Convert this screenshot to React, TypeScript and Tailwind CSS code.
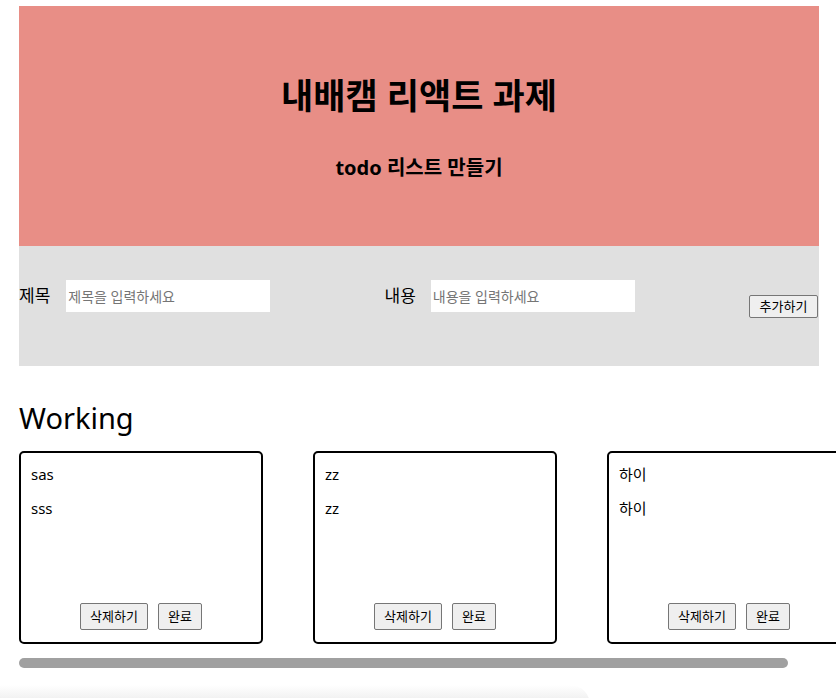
const todos = [
  { id: 1, title: "sas", body: "sss" },
  { id: 2, title: "zz", body: "zz" },
  { id: 3, title: "하이", body: "하이" }
];

const font = "font-['Noto_Sans','Noto_Sans_CJK_KR',sans-serif]";

const nativeButton =
  "rounded-[2px] border border-[#767676] bg-[#efefef] text-[13px] leading-[17px] text-black";

function TodoCard({ title, body }: { title: string; body: string }) {
  return (
    <div className="flex h-[193px] w-[244px] shrink-0 flex-col rounded-[5px] border-2 border-black px-[10px] pb-[12px] pt-[11px]">
      <p className="text-[15px] leading-[20px]">{title}</p>
      <p className="mt-[14px] text-[15px] leading-[20px]">{body}</p>
      <div className="mt-auto flex justify-center gap-[10px]">
        <button type="button" className={`${nativeButton} h-[27px] px-[9px]`}>
          삭제하기
        </button>
        <button type="button" className={`${nativeButton} h-[27px] px-[9px]`}>
          완료
        </button>
      </div>
    </div>
  );
}

export default function App() {
  return (
    <div className={`${font} h-[698px] overflow-hidden bg-white text-black`}>
      <div className="ml-[19px] pt-[6px]">
        <header className="flex h-[240px] w-[800px] flex-col items-center bg-[#e88e86] pt-[68px]">
          <h1 className="text-[35px] font-bold leading-[44px]">내배캠 리액트 과제</h1>
          <h2 className="mt-[36px] text-[20px] font-bold leading-[28px]">todo 리스트 만들기</h2>
        </header>

        <section className="flex h-[120px] w-[800px] items-center justify-between bg-[#e0e0e0] pr-[1px]">
          <div className="mb-[20px] flex items-center">
            <span className="text-[17px]">제목</span>
            <input
              className="ml-[16px] h-[32px] w-[204px] bg-white pl-[2px] text-[14px] outline-none placeholder:text-[#757575]"
              placeholder="제목을 입력하세요"
            />
          </div>
          <div className="mb-[20px] flex items-center">
            <span className="text-[17px]">내용</span>
            <input
              className="ml-[15px] h-[32px] w-[204px] bg-white pl-[2px] text-[14px] outline-none placeholder:text-[#757575]"
              placeholder="내용을 입력하세요"
            />
          </div>
          <button type="button" className={`${nativeButton} h-[23px] w-[69px]`}>
            추가하기
          </button>
        </section>

        <h2 className="mt-[32px] text-[29px] font-normal leading-[40px]">Working</h2>

        <div className="mt-[13px] w-[817px] overflow-hidden">
          <div className="flex gap-[50px]">
            {todos.map((todo) => (
              <TodoCard key={todo.id} title={todo.title} body={todo.body} />
            ))}
          </div>
        </div>
        <div className="mt-[14px] h-[10px] w-[769px] rounded-full bg-[#a0a0a0]" />
      </div>

      <div className="mt-[17px] h-[20px] w-[590px] rounded-tr-[40px] bg-gradient-to-b from-white to-[#ebebeb]" />
    </div>
  );
}
